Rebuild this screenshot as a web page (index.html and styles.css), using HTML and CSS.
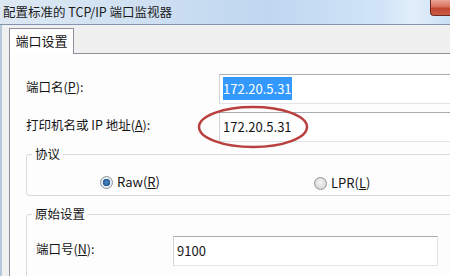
FILE: index.html
```html
<!DOCTYPE html>
<html lang="zh-CN">
<head>
<meta charset="utf-8">
<title>配置标准的 TCP/IP 端口监视器</title>
<link rel="stylesheet" href="styles.css">
</head>
<body>
<div class="window">
  <div class="titlebar">
    <span class="title">配置标准的 TCP/IP 端口监视器</span>
    <span class="close"></span>
  </div>
  <div class="client">
    <div class="tabs"><div class="tab">端口设置</div></div>
    <div class="panel">
      <div class="row r1">
        <span class="label">端口名(<u>P</u>):</span>
        <div class="input"><span class="sel">172.20.5.31</span></div>
      </div>
      <div class="row r2">
        <span class="label">打印机名或 IP 地址(<u>A</u>):</span>
        <div class="input">172.20.5.31</div>
      </div>
      <fieldset class="group g1">
        <legend>协议</legend>
        <div class="radios">
          <span class="radio"><span class="dot on"></span><span class="rtext">Raw(<u>R</u>)</span></span>
          <span class="radio lpr"><span class="dot"></span><span class="rtext">LPR(<u>L</u>)</span></span>
        </div>
      </fieldset>
      <fieldset class="group g2">
        <legend>原始设置</legend>
        <div class="row r3">
          <span class="label">端口号(<u>N</u>):</span>
          <div class="input short">9100</div>
        </div>
      </fieldset>
    </div>
  </div>
  <svg class="mark" width="114" height="46" viewBox="0 0 114 46"><ellipse cx="57" cy="23" rx="54" ry="20" fill="none" stroke="#b9403f" stroke-width="2.5"/></svg>
</div>
</body>
</html>
```

FILE: styles.css
```css
html, body {
  margin: 0;
  padding: 0;
  width: 450px;
  height: 276px;
  overflow: hidden;
  background: #f0f0f0;
  font-family: "Noto Sans CJK SC", "Noto Sans", sans-serif;
  font-size: 12.5px;
  color: #151515;
}
.window {
  position: relative;
  width: 450px;
  height: 276px;
  overflow: hidden;
}
.titlebar {
  height: 24px;
  border-bottom: 1px solid #8196ae;
  display: flex;
  align-items: flex-start;
  background: linear-gradient(to right, #dde8f3 0%, #cddff1 35%, #bfd7f0 60%, #d2e5f8 85%, #e2eefa 92%, #c9dff5 100%);
}
.title {
  padding-left: 3px;
  line-height: 24px;
  font-size: 12.5px;
  color: #1a1a1a;
}
.close {
  margin-left: auto;
  width: 19px;
  height: 15px;
  border: 1px solid #6e2a20;
  border-top: none;
  border-right: none;
  border-bottom-left-radius: 4px;
  background: linear-gradient(to bottom, #e9a597 0%, #d7715f 45%, #c1452f 55%, #c95a45 100%);
}
.client {
  border-left: 2px solid #b5c8dc;
  height: 251px;
}
.tabs {
  margin-left: 7px;
  height: 28px;
  border-bottom: 1px solid #8e9199;
  display: flex;
  align-items: flex-end;
}
.tab {
  width: 63px;
  height: 25px;
  margin-bottom: -1px;
  border: 1px solid #8e9199;
  border-bottom: none;
  background: #fff;
  line-height: 24px;
  text-align: center;
  font-size: 13px;
  position: relative;
}
.panel {
  margin-left: 7px;
  border-left: 1px solid #8e9199;
  background: #fdfdfd;
  height: 230px;
  padding-left: 16px;
  padding-top: 20px;
}
.row {
  display: flex;
  align-items: center;
}
.r2 { margin-top: 8px; }
.label {
  width: 193px;
  flex: none;
  margin-bottom: 6px;
}
.input {
  box-sizing: border-box;
  height: 30px;
  width: 260px;
  flex: none;
  border: 1px solid #e1e3e8;
  border-top-color: #a9acb3;
  border-left-color: #d0d3d9;
  background: #fff;
  padding-left: 3px;
  line-height: 27px;
  font-size: 13px;
}
.sel {
  background: #3399ff;
  color: #fff;
  padding: 2px 0;
}
.group {
  margin: 3px 0 0 0;
  width: 500px;
  border: 1px solid #d5dbe1;
  border-radius: 3px;
  padding: 0 5px;
}
.group legend {
  padding: 0 3px;
  line-height: 18px;
  font-size: 12.5px;
}
.g1 {
  height: 40px;
  padding-top: 9px;
  box-sizing: content-box;
}
.radios {
  display: grid;
  grid-template-columns: 214px auto;
  padding-left: 68px;
  line-height: 18px;
}
.radio {
  display: flex;
  align-items: center;
  gap: 4px;
}
.rtext { font-size: 13px; }
.lpr { margin-top: 2px; }
.dot {
  box-sizing: border-box;
  width: 13px;
  height: 13px;
  border-radius: 50%;
  border: 1px solid #8f959c;
  background: radial-gradient(circle at 50% 40%, #f6f6f6 0%, #d8d8d8 70%, #c4c4c4 100%);
}
.dot.on {
  background: radial-gradient(circle, #4b8ac6 0%, #245b92 45%, #e9eef3 50%, #dfe3e8 100%);
}
.g2 {
  margin-top: 9px;
  padding-top: 13px;
  height: 60px;
}
.r3 {
  padding-left: 4px;
}
.r3 .label { width: 137px; }
.input.short { width: 265px; }
.mark {
  position: absolute;
  left: 196px;
  top: 104px;
}
```
